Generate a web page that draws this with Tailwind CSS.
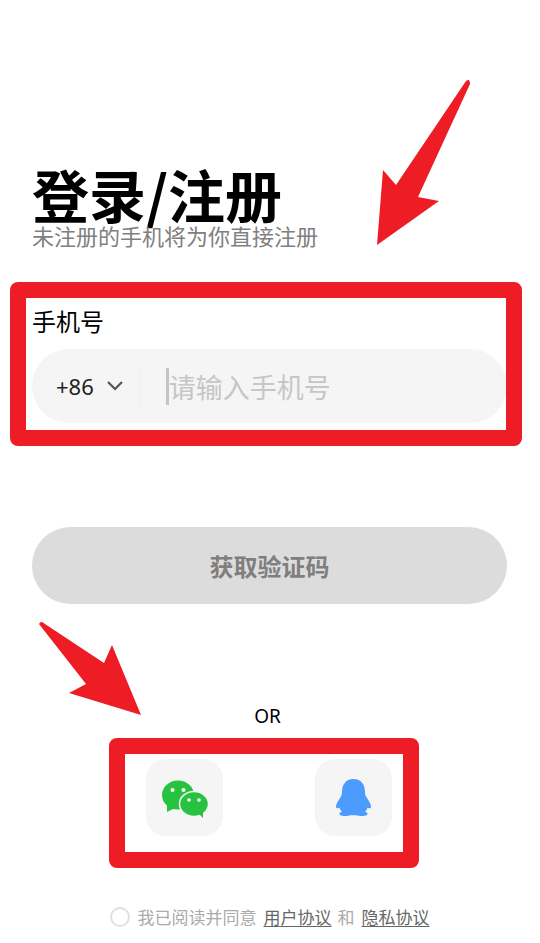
<!DOCTYPE html>
<html lang="zh-CN">
<head>
    <meta charset="UTF-8">
    <meta name="viewport" content="width=device-width, initial-scale=1.0">
    <title>登录/注册</title>
    <script src="https://cdn.jsdelivr.net/npm/@tailwindcss/browser@4"></script>
</head>
<body class="bg-white font-['Noto_Sans_CJK_SC','Noto_Sans',sans-serif] text-black">
    <div class="relative w-[540px] h-[943px] overflow-hidden">

        <main class="flex flex-col pl-[32px] pr-[33px] pt-[162px]">
            <!-- Heading -->
            <h1 class="text-[57px] leading-[62px] font-bold">登录/注册</h1>
            <p class="text-[22px] leading-[30px] text-[#808080] -mt-[4px]">未注册的手机将为你直接注册</p>

            <!-- Phone -->
            <section class="relative mt-[59px]">
                <label class="block text-[24px] leading-[24px] h-[24px]">手机号</label>
                <div class="mt-[16px] h-[74px] rounded-full bg-[#f5f5f5] flex items-center">
                    <span class="ml-[24px] text-[22px] leading-none font-['Noto_Sans',sans-serif] text-[#222]">+86</span>
                    <svg class="ml-[12px]" width="18" height="12" viewBox="0 0 18 12" fill="none" stroke="#555" stroke-width="2.2"><path d="M2 2l7 7 7-7"/></svg>
                    <span class="ml-[15px] w-px h-[40px] bg-[#eeeeee]"></span>
                    <span class="ml-[26px] w-[3px] h-[37px] bg-[#c4c4c4]"></span>
                    <span class="text-[27px] leading-none text-[#c6c6c6]">请输入手机号</span>
                </div>
                <div class="absolute left-[-22px] right-[-15px] top-[-27px] bottom-[-23px] border-[16px] border-[#ee1c25] rounded-[8px]"></div>
            </section>

            <!-- Submit -->
            <button class="mt-[104px] h-[77px] rounded-full bg-[#dcdcdc] text-[24px] font-bold text-[#7f7f7f]">获取验证码</button>

            <p class="mt-[98px] text-center text-[19px] leading-[28px] font-['Noto_Sans',sans-serif] -translate-x-[2px]">OR</p>

            <!-- Third party login -->
            <section class="relative mt-[29px] mx-auto w-[246px] flex justify-between -translate-x-[1px]">
                <div class="w-[77px] h-[77px] rounded-[20px] bg-[#f5f5f5]">
                    <svg width="77" height="77" viewBox="0 0 77 77">
                        <ellipse cx="32" cy="36" rx="16" ry="14.5" fill="#27c23f"/>
                        <path d="M21 46l0 7 8-4z" fill="#27c23f"/>
                        <circle cx="26.5" cy="31" r="2" fill="#fff"/>
                        <circle cx="37.5" cy="31" r="2" fill="#fff"/>
                        <ellipse cx="48" cy="45" rx="14.5" ry="12.5" fill="#27c23f" stroke="#f5f5f5" stroke-width="1.5"/>
                        <path d="M53 55l4 4 0-7z" fill="#27c23f"/>
                        <circle cx="43" cy="41" r="1.8" fill="#fff"/>
                        <circle cx="53" cy="41" r="1.8" fill="#fff"/>
                    </svg>
                </div>
                <div class="w-[77px] h-[77px] rounded-[20px] bg-[#f5f5f5]">
                    <svg width="77" height="77" viewBox="0 0 77 77">
                        <path fill="#4c9bff" d="M38.5 20C30.500 20 27 26 27 33C27 35.500 26.500 37 25 39C23 42 21 45 21 47.500C21 49.500 22.500 50 24.500 48.500C25 50.500 25.500 51.500 27 52.500C25 53.500 24 54.500 24.500 55.500C25.500 57 31 57.500 34 56.500C35.500 56 41.500 56 43 56.500C46 57.500 51.500 57 52.500 55.500C53 54.500 52 53.500 50 52.500C51.500 51.500 52 50.500 52.500 48.500C54.500 50 56 49.500 56 47.500C56 45 54 42 52 39C50.500 37 50 35.500 50 33C50 26 46.500 20 38.500 20Z"/>
                    </svg>
                </div>
                <div class="absolute left-[-37px] right-[-27px] top-[-21px] bottom-[-32px] border-[16px] border-[#ee1c25] rounded-[8px]"></div>
            </section>

            <!-- Agreement -->
            <div class="mt-[69px] flex items-center justify-center text-[17px] leading-[24px] text-[#aaaaaa] whitespace-nowrap">
                <span class="w-[20px] h-[20px] rounded-full border-2 border-[#e0e0e0] mr-[8px]"></span>
                <span>我已阅读并同意</span>
                <a class="ml-[7px] text-[#666] underline underline-offset-2">用户协议</a>
                <span class="ml-[6px]">和</span>
                <a class="ml-[7px] text-[#666] underline underline-offset-2">隐私协议</a>
            </div>
        </main>

        <!-- Annotation arrows -->
        <svg class="absolute inset-0 pointer-events-none" width="540" height="943" viewBox="0 0 540 943">
            <path fill="#ee1c25" d="M466 81Q470 78 470 84L418 197L439 201L377 245L383 170L396 185Z"/>
            <path fill="#ee1c25" d="M39 624Q41 620 45 624L104 663L112 645L141 715L69 693L86 684Z"/>
        </svg>
    </div>
</body>
</html>
